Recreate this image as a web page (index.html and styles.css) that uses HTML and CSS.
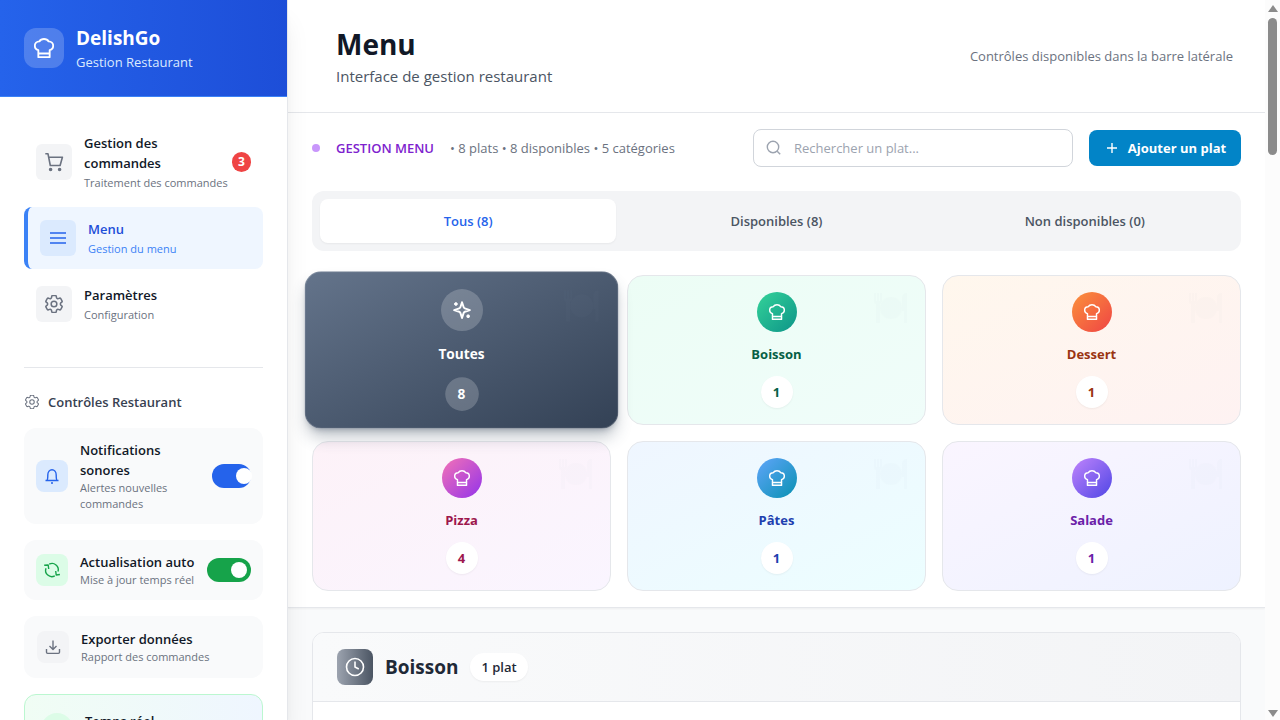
FILE: index.html
```html
<!DOCTYPE html>
<html lang="fr">
<head>
<meta charset="utf-8">
<meta name="viewport" content="width=device-width, initial-scale=1">
<title>DelishGo - Menu</title>
<link rel="stylesheet" href="styles.css">
</head>
<body>
<svg class="sprite" aria-hidden="true">
  <symbol id="chef" viewBox="0 0 24 24"><path d="M5.2 14.6C2.6 13.9 1 12 1 9.4c0-3 2.3-5.3 5.4-5.3C7.5 2.3 9.6 1.2 12 1.2s4.5 1.1 5.6 2.9c3.1 0 5.4 2.3 5.4 5.3 0 2.6-1.6 4.500-4.200 5.200V23H5.200zM5.200 18.600h13.600"/></symbol>
  <symbol id="cog" viewBox="2.5 2.5 19 19"><path d="M9.594 3.94c.09-.542.56-.94 1.11-.94h2.593c.55 0 1.020.398 1.110.940l.213 1.281c.063.374.313.686.645.870.074.040.147.083.220.127.325.196.720.257 1.075.124l1.217-.456a1.125 1.125 0 0 1 1.370.490l1.296 2.247a1.125 1.125 0 0 1-.260 1.431l-1.003.827c-.293.241-.438.613-.430.992a7.723 7.723 0 0 1 0 .255c-.008.378.137.750.430.991l1.004.827c.424.350.534.955.260 1.430l-1.298 2.247a1.125 1.125 0 0 1-1.369.491l-1.217-.456c-.355-.133-.750-.072-1.076.124a6.470 6.470 0 0 1-.220.128c-.331.183-.581.495-.644.869l-.213 1.281c-.090.543-.560.940-1.110.940h-2.594c-.550 0-1.019-.398-1.110-.940l-.213-1.281c-.062-.374-.312-.686-.644-.870a6.520 6.520 0 0 1-.220-.127c-.325-.196-.720-.257-1.076-.124l-1.217.456a1.125 1.125 0 0 1-1.369-.490l-1.297-2.247a1.125 1.125 0 0 1 .260-1.431l1.004-.827c.292-.240.437-.613.430-.991a6.932 6.932 0 0 1 0-.255c.007-.380-.138-.751-.430-.992l-1.004-.827a1.125 1.125 0 0 1-.260-1.430l1.297-2.247a1.125 1.125 0 0 1 1.370-.491l1.216.456c.356.133.751.072 1.076-.124.072-.044.146-.086.220-.128.332-.183.582-.495.644-.869l.214-1.280Z"/><circle cx="12" cy="12" r="3"/></symbol>
  <symbol id="dish" viewBox="0 0 36 32"><path d="M1 1v8c0 2 1 3 2 3v19h4V12c1 0 2-1 2-3V1H7v8H6V1H4v8H3V1zM31 31V19h-2V6c0-3 2-5 5-5v30z"/><circle cx="18" cy="16" r="11"/></symbol>
</svg>
<div class="app">
  <aside class="sidebar">
    <div class="brand">
      <span class="brand-logo"><svg class="icon icon-20"><use href="#chef"/></svg></span>
      <div>
        <div class="brand-name">DelishGo</div>
        <div class="brand-sub">Gestion Restaurant</div>
      </div>
    </div>
    <nav class="nav">
      <a class="nav-item" href="#commandes">
        <span class="tile tile-36"><svg class="icon icon-18" viewBox="0 0 18 18"><path d="M.3.8H3l2.300 11.700h9.800l2.300-8.200H3.800"/><circle class="solid" cx="5.600" cy="16.500" r="1"/><circle class="solid" cx="14.600" cy="16.500" r="1"/></svg></span>
        <span class="item-text"><strong>Gestion des<br>commandes</strong><small>Traitement des commandes</small></span>
        <span class="badge">3</span>
      </a>
      <a class="nav-item active" href="#menu" aria-current="page">
        <span class="tile tile-36"><svg class="icon icon-18" viewBox="0 0 18 18"><path d="M1 4h16M1 9h16M1 14h16"/></svg></span>
        <span class="item-text"><strong>Menu</strong><small>Gestion du menu</small></span>
      </a>
      <a class="nav-item" href="#parametres">
        <span class="tile tile-36"><svg class="icon icon-18"><use href="#cog"/></svg></span>
        <span class="item-text"><strong>Paramètres</strong><small>Configuration</small></span>
      </a>
    </nav>
    <section class="controls">
      <h2 class="controls-title"><svg class="icon icon-16" viewBox="-1 -1 18 18"><use href="#cog" width="16" height="16"/></svg>Contrôles Restaurant</h2>
      <div class="control">
        <span class="tile tile-32 blue"><svg class="icon icon-16" viewBox="0 0 16 16"><path d="M1.500 12.500h13M3 12.500c.8-1 .8-3 .8-5.500a4.200 5.300 0 0 1 8.400 0c0 2.500 0 4.500.8 5.500M7 15h2"/></svg></span>
        <label class="item-text" for="sound"><strong>Notifications sonores</strong><small>Alertes nouvelles commandes</small></label>
        <input class="toggle toggle-compact" type="checkbox" id="sound" checked>
      </div>
      <div class="control">
        <span class="tile tile-32 green"><svg class="icon icon-16" viewBox="0 0 16 16"><path d="M5.200 2.200A6.200 6.200 0 0 1 14 9.500M2 6.200a6.200 6.200 0 0 0 8.800 7.600M.2 3.200l4-.2.500 4M11.700 9l.500 4 3.700-.500"/></svg></span>
        <label class="item-text" for="auto"><strong>Actualisation auto</strong><small>Mise à jour temps réel</small></label>
        <input class="toggle toggle-green" type="checkbox" id="auto" checked>
      </div>
      <button class="control control-button" type="button">
        <span class="tile tile-32"><svg class="icon icon-16" viewBox="0 0 16 16"><path d="M8 1.500v8.500M4.500 7 8 10.500 11.500 7M1.500 10v3.300c0 .700.400 1.100 1.100 1.100h10.800c.700 0 1.100-.400 1.100-1.100V10"/></svg></span>
        <span class="item-text"><strong>Exporter données</strong><small>Rapport des commandes</small></span>
      </button>
      <div class="live">
        <span class="live-dot"></span>
        <span class="item-text"><strong>Temps réel</strong><small>Connecté</small></span>
      </div>
    </section>
  </aside>
  <main class="main">
    <header class="page-header">
      <div>
        <h1>Menu</h1>
        <p>Interface de gestion restaurant</p>
      </div>
      <span class="header-note">Contrôles disponibles dans la barre latérale</span>
    </header>
    <section class="panel">
      <div class="toolbar">
        <div class="status"><span class="status-dot"></span><span class="status-name">GESTION MENU</span><span class="status-info">• 8 plats • 8 disponibles • 5 catégories</span></div>
        <label class="search">
          <svg class="icon icon-16" viewBox="0 0 16 16"><circle cx="7" cy="7" r="5.700"/><path d="m11.200 11.200 3 3"/></svg>
          <input type="search" placeholder="Rechercher un plat..." aria-label="Rechercher un plat">
        </label>
        <button class="add" type="button"><svg class="icon icon-16" viewBox="0 0 16 16"><path d="M8 3v10M3 8h10"/></svg>Ajouter un plat</button>
      </div>
      <div class="tabs" role="tablist">
        <button class="tab selected" type="button" role="tab" aria-selected="true">Tous (8)</button>
        <button class="tab" type="button" role="tab" aria-selected="false">Disponibles (8)</button>
        <button class="tab" type="button" role="tab" aria-selected="false">Non disponibles (0)</button>
      </div>
      <div class="categories">
        <button class="category all" type="button">
          <svg class="watermark"><use href="#dish"/></svg>
          <span class="category-icon"><svg class="icon icon-20" viewBox="0 0 24 24"><path d="m12 3-1.900 5.800a2 2 0 0 1-1.300 1.300L3 12l5.800 1.900a2 2 0 0 1 1.300 1.300L12 21l1.900-5.800a2 2 0 0 1 1.300-1.300L21 12l-5.800-1.900a2 2 0 0 1-1.300-1.300zM5 3v4M3 5h4M19 17v4M17 19h4"/></svg></span>
          <span class="category-name">Toutes</span><span class="count">8</span>
        </button>
        <button class="category drink" type="button">
          <svg class="watermark"><use href="#dish"/></svg>
          <span class="category-icon"><svg class="icon icon-16"><use href="#chef"/></svg></span>
          <span class="category-name">Boisson</span><span class="count">1</span>
        </button>
        <button class="category dessert" type="button">
          <svg class="watermark"><use href="#dish"/></svg>
          <span class="category-icon"><svg class="icon icon-16"><use href="#chef"/></svg></span>
          <span class="category-name">Dessert</span><span class="count">1</span>
        </button>
        <button class="category pizza" type="button">
          <svg class="watermark"><use href="#dish"/></svg>
          <span class="category-icon"><svg class="icon icon-16"><use href="#chef"/></svg></span>
          <span class="category-name">Pizza</span><span class="count">4</span>
        </button>
        <button class="category pasta" type="button">
          <svg class="watermark"><use href="#dish"/></svg>
          <span class="category-icon"><svg class="icon icon-16"><use href="#chef"/></svg></span>
          <span class="category-name">Pâtes</span><span class="count">1</span>
        </button>
        <button class="category salad" type="button">
          <svg class="watermark"><use href="#dish"/></svg>
          <span class="category-icon"><svg class="icon icon-16"><use href="#chef"/></svg></span>
          <span class="category-name">Salade</span><span class="count">1</span>
        </button>
      </div>
    </section>
    <section class="dishes">
      <article class="group">
        <header class="group-header">
          <span class="group-icon"><svg class="icon icon-20" viewBox="0 0 20 20"><circle cx="10" cy="10" r="8.500"/><path d="M10 4.500V10l3.800 2"/></svg></span>
          <h2>Boisson</h2>
          <span class="pill">1 plat</span>
        </header>
        <div class="group-body"></div>
      </article>
    </section>
  </main>
  <div class="scrollbar" aria-hidden="true"><span class="arrow up"></span><span class="thumb"></span><span class="arrow down"></span></div>
</div>
</body>
</html>
```
FILE: styles.css
```css
* { box-sizing: border-box; }
body {
  margin: 0;
  font-family: "Open Sans", "Noto Sans", sans-serif;
  font-size: 13px;
  line-height: 20px;
  color: #111827;
  background: #f9fafb;
}
button, input { font: inherit; color: inherit; }
button { cursor: pointer; }
h1, h2, p { margin: 0; }
.sprite { position: absolute; width: 0; height: 0; }
.icon { flex: none; display: block; fill: none; stroke: currentColor; stroke-width: 1.6; stroke-linejoin: round; overflow: visible; }
.icon .solid { fill: currentColor; }
.icon-16 { width: 16px; height: 16px; stroke-width: 1.4; }
.icon-18 { width: 18px; height: 18px; }
.icon-20 { width: 20px; height: 20px; stroke-width: 2.2; }

.app { display: flex; height: 100vh; overflow: hidden; }

.sidebar {
  flex: 0 0 288px;
  height: 100%;
  overflow: hidden;
  background: #fff;
  border-right: 1px solid #e5e7eb;
  box-shadow: 0 20px 25px -5px rgba(0, 0, 0, .1), 0 8px 10px -6px rgba(0, 0, 0, .1);
  z-index: 2;
}
.brand {
  display: flex;
  align-items: center;
  gap: 12px;
  padding: 24px;
  color: #fff;
  background: linear-gradient(to right, #2563eb, #1d4ed8);
  border-bottom: 1px solid #3b82f6;
}
.brand-logo {
  display: grid;
  place-items: center;
  width: 40px;
  height: 40px;
  border-radius: 12px;
  background: rgba(255, 255, 255, .2);
}
.brand-name { font-size: 19px; line-height: 28px; font-weight: 700; }
.brand-sub { color: #dbeafe; }

.nav { display: flex; flex-direction: column; gap: 4px; padding: 24px 24px 32px; }
.nav-item {
  display: flex;
  align-items: center;
  gap: 12px;
  padding: 12px;
  border-radius: 8px;
  color: inherit;
  text-decoration: none;
}
.tile { flex: none; display: grid; place-items: center; border-radius: 8px; background: #f3f4f6; color: #6b7280; }
.tile-36 { width: 36px; height: 36px; border-radius: 6px; }
.tile-32 { width: 32px; height: 32px; }
.tile.blue { background: #dbeafe; color: #2563eb; }
.tile.green { background: #dcfce7; color: #16a34a; }
.item-text { flex: 1; min-width: 0; text-align: left; }
.item-text strong { display: block; font-weight: 600; }
.item-text small { display: block; font-size: 11px; line-height: 16px; color: #6b7280; }
.nav .item-text small { padding-top: 2px; white-space: nowrap; }
.nav-item.active { background: #eff6ff; border-left: 4px solid #3b82f6; color: #1d4ed8; }
.nav-item.active .tile { background: #dbeafe; color: #2563eb; }
.nav-item.active small { color: #3b82f6; }
.badge {
  display: grid;
  place-items: center;
  width: 19px;
  height: 20px;
  border-radius: 10px;
  background: #ef4444;
  color: #fff;
  font-size: 12px;
  font-weight: 700;
}

.controls { display: flex; flex-direction: column; gap: 16px; margin: 0 24px; padding-top: 24px; border-top: 1px solid #e5e7eb; }
.controls-title { display: flex; align-items: center; gap: 8px; font-size: 13px; line-height: 20px; font-weight: 600; color: #374151; }
.controls-title .icon { color: #6b7280; }
.control { display: flex; align-items: center; gap: 12px; padding: 12px; border: 0; border-radius: 12px; background: #f9fafb; }
.control-button { border: 1px solid transparent; }
.toggle {
  appearance: none;
  flex: none;
  width: 44px;
  height: 24px;
  margin: 0 0 0 -8px;
  border-radius: 12px;
  background: #2563eb;
}
.toggle::before { content: ""; display: block; width: 16px; height: 16px; margin: 4px 0 0 24px; border-radius: 8px; background: #fff; }
.toggle-compact { width: 39px; margin: 0; }
.toggle-green { background: #16a34a; }
.live {
  display: flex;
  align-items: center;
  gap: 12px;
  padding: 16px;
  border: 1px solid #bbf7d0;
  border-radius: 12px;
  background: linear-gradient(to right, #f0fdf4, #eff6ff);
}
.live-dot { width: 32px; height: 32px; border-radius: 16px; background: #dcfce7; }

.main { flex: 1; min-width: 0; height: 100%; overflow: hidden; }
.page-header {
  display: flex;
  align-items: center;
  justify-content: space-between;
  padding: 24px 32px 24px 48px;
  background: #fff;
  border-bottom: 1px solid #e5e7eb;
}
.page-header h1 { font-size: 28px; line-height: 40px; font-weight: 700; }
.page-header p { font-size: 15px; line-height: 24px; color: #4b5563; }
.header-note { color: #6b7280; }

.panel { padding: 16px 24px; background: #fff; border-bottom: 1px solid #e5e7eb; box-shadow: 0 1px 2px rgba(0, 0, 0, .05); }
.toolbar { display: flex; align-items: center; gap: 16px; margin-bottom: 24px; }
.status { flex: 1; display: flex; align-items: center; gap: 16px; white-space: nowrap; }
.status-dot { width: 8px; height: 8px; border-radius: 4px; background: #c896fb; }
.status-name { font-weight: 600; color: #7e22ce; }
.status-info { color: #6b7280; }
.search {
  display: flex;
  align-items: center;
  gap: 12px;
  width: 320px;
  height: 38px;
  padding: 0 12px;
  border: 1px solid #d1d5db;
  border-radius: 8px;
  color: #9ca3af;
}
.search input { flex: 1; min-width: 0; padding: 0; border: 0; outline: 0; background: none; color: #111827; }
.search input::placeholder { color: #9ca3af; }
.add {
  display: flex;
  align-items: center;
  justify-content: center;
  gap: 8px;
  width: 152px;
  height: 36px;
  padding: 0;
  border: 0;
  border-radius: 8px;
  background: #0284c7;
  color: #fff;
  font-weight: 700;
  white-space: nowrap;
}
.tabs {
  display: grid;
  grid-template-columns: repeat(3, 1fr);
  gap: 12px;
  margin-bottom: 24px;
  padding: 8px;
  border-radius: 12px;
  background: #f3f4f6;
}
.tab { padding: 12px; border: 0; border-radius: 8px; background: none; color: #4b5563; font-weight: 600; }
.tab.selected { background: #fff; color: #2563eb; box-shadow: 0 1px 2px rgba(0, 0, 0, .05); }

.categories { display: grid; grid-template-columns: repeat(3, 1fr); gap: 16px; }
.category {
  position: relative;
  display: flex;
  flex-direction: column;
  align-items: center;
  gap: 12px;
  padding: 16px;
  border: 1px solid #e5e7eb;
  border-radius: 16px;
  font-weight: 700;
}
.category-icon { display: grid; place-items: center; width: 40px; height: 40px; border-radius: 20px; color: #fff; }
.category-icon .icon-16 { stroke-width: 2.2; }
.category-icon .icon-20 { width: 20px; height: 20px; }
.count { display: grid; place-items: center; width: 32px; height: 32px; border-radius: 16px; background: #fff; box-shadow: 0 1px 2px rgba(0, 0, 0, .05); }
.watermark { position: absolute; top: 16px; right: 16px; width: 36px; height: 32px; fill: #64748b; opacity: .01; }
.all {
  z-index: 1;
  transform: scale(1.05);
  border-color: rgba(229, 231, 235, .2);
  background: linear-gradient(to bottom right, #64748b, #334155) border-box;
  color: #fff;
  box-shadow: 0 10px 15px -3px rgba(51, 65, 85, .3), 0 4px 6px -4px rgba(51, 65, 85, .4);
}
.all .category-icon, .all .count { background: rgba(255, 255, 255, .2); box-shadow: none; }
.all .watermark { opacity: .08; }
.drink { background: linear-gradient(to bottom right, #ecfdf5, #f0fdfa); color: #065f46; }
.drink .category-icon { background: linear-gradient(to bottom right, #34d399, #0d9488); }
.dessert { background: linear-gradient(to bottom right, #fff7ed, #fef2f2); color: #9a3412; }
.dessert .category-icon { background: linear-gradient(to bottom right, #fb923c, #ef4444); }
.pizza { background: linear-gradient(to bottom right, #fdf2f8, #faf5ff); color: #9d174d; }
.pizza .category-icon { background: linear-gradient(to bottom right, #f472b6, #9333ea); }
.pasta { background: linear-gradient(to bottom right, #eff6ff, #ecfeff); color: #1e40af; }
.pasta .category-icon { background: linear-gradient(to bottom right, #60a5fa, #0891b2); }
.salad { background: linear-gradient(to bottom right, #faf5ff, #eef2ff); color: #6b21a8; }
.salad .category-icon { background: linear-gradient(to bottom right, #c084fc, #4f46e5); }

.dishes { padding: 24px; }
.group { border: 1px solid #e5e7eb; border-radius: 12px; overflow: hidden; background: #fff; }
.group-header {
  display: flex;
  align-items: center;
  gap: 12px;
  padding: 16px 24px;
  background: linear-gradient(to right, #f9fafb, #f3f4f6);
  border-bottom: 1px solid #e5e7eb;
}
.group-icon { display: grid; place-items: center; width: 36px; height: 36px; border-radius: 8px; color: #fff; background: linear-gradient(to right, #9ca3af, #4b5563); }
.group-icon .icon { stroke-width: 1.6; }
.group-header h2 { font-size: 19px; line-height: 28px; font-weight: 700; color: #1f2937; }
.pill { padding: 4px 11px; border-radius: 14px; background: #fff; font-weight: 600; color: #1f2937; box-shadow: 0 1px 2px rgba(0, 0, 0, .05); }
.group-body { min-height: 240px; }

.scrollbar { flex: 0 0 15px; display: flex; flex-direction: column; align-items: center; padding: 5px 0 3px; background: #fcfcfc; }
.thumb { width: 9px; height: 137px; margin: 6px 0 auto; border-radius: 5px; background: #8b8b8b; }
.arrow { border: 5px solid transparent; }
.arrow.up { border-top: 0; border-bottom: 7px solid #8b8b8b; }
.arrow.down { border-bottom: 0; border-top: 7px solid #8b8b8b; }
```
